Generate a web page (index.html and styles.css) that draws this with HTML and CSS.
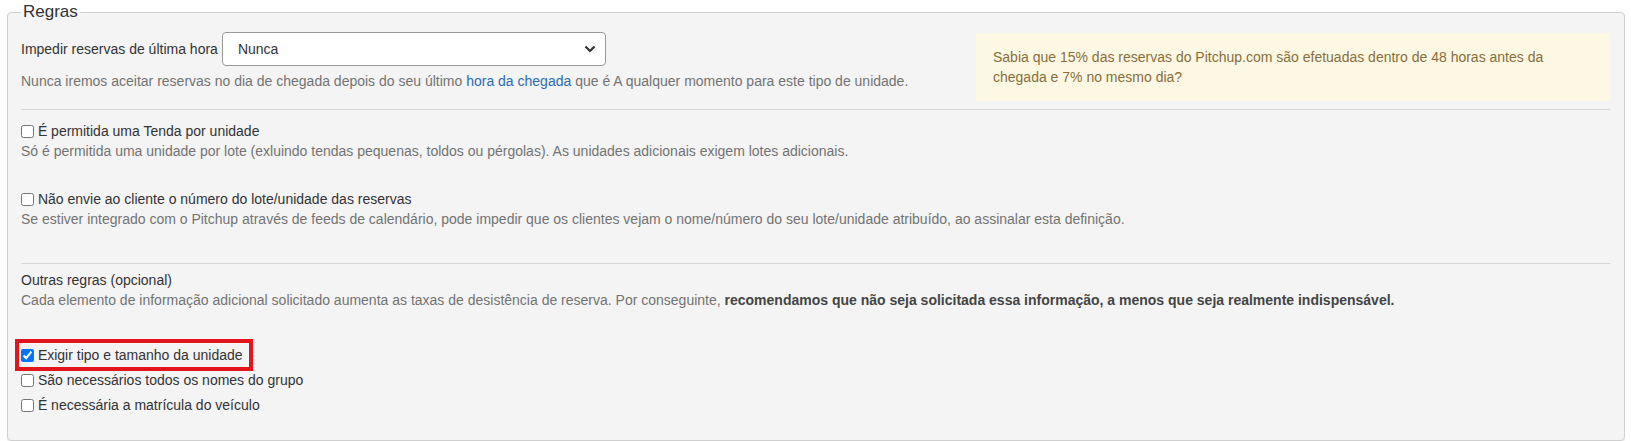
FILE: index.html
```html
<!DOCTYPE html>
<html lang="pt">
<head>
    <meta charset="UTF-8">
    <meta name="viewport" content="width=device-width, initial-scale=1.0">
    <title>Regras</title>
    <link rel="stylesheet" href="styles.css">
</head>
<body>
    <fieldset class="rules">
        <legend>Regras</legend>

        <div class="rules-top">
            <div class="rules-main">
                <div class="inline-field">
                    <label for="cutoff">Impedir reservas de última hora</label>
                    <span class="select-wrap">
                        <select id="cutoff">
                            <option>Nunca</option>
                            <option>No dia de chegada</option>
                            <option>24 horas antes</option>
                        </select>
                        <svg class="chevron" width="12" height="8" viewBox="0 0 12 8"><path d="M1.5 1.5 L6 6 L10.5 1.5" fill="none" stroke="#333" stroke-width="2.2"/></svg>
                    </span>
                </div>
                <p class="help">Nunca iremos aceitar reservas no dia de chegada depois do seu último <a href="#">hora da chegada</a> que é A qualquer momento para este tipo de unidade.</p>
            </div>
            <div class="rules-side">
                <div class="tip">Sabia que 15% das reservas do Pitchup.com são efetuadas dentro de 48 horas antes da chegada e 7% no mesmo dia?</div>
            </div>
        </div>

        <hr>

        <div class="option">
            <label class="check"><input type="checkbox"> É permitida uma Tenda por unidade</label>
            <p class="help">Só é permitida uma unidade por lote (exluindo tendas pequenas, toldos ou pérgolas). As unidades adicionais exigem lotes adicionais.</p>
        </div>

        <div class="option">
            <label class="check"><input type="checkbox"> Não envie ao cliente o número do lote/unidade das reservas</label>
            <p class="help">Se estiver integrado com o Pitchup através de feeds de calendário, pode impedir que os clientes vejam o nome/número do seu lote/unidade atribuído, ao assinalar esta definição.</p>
        </div>

        <hr class="sep-other">

        <div class="other">
            <div class="other-title">Outras regras (opcional)</div>
            <p class="help">Cada elemento de informação adicional solicitado aumenta as taxas de desistência de reserva. Por conseguinte, <b>recomendamos que não seja solicitada essa informação, a menos que seja realmente indispensável.</b></p>
        </div>

        <div class="check-list">
            <div><label class="check marked"><input type="checkbox" checked> Exigir tipo e tamanho da unidade</label></div>
            <div><label class="check"><input type="checkbox"> São necessários todos os nomes do grupo</label></div>
            <div><label class="check"><input type="checkbox"> É necessária a matrícula do veículo</label></div>
        </div>
    </fieldset>
</body>
</html>
```

FILE: styles.css
```css
body {
	margin: 2px 6px 0 7px;
	font-family: "Liberation Sans", Arial, sans-serif;
	font-size: 14px;
	line-height: 20px;
	color: #333;
	background: #fff;
}

.rules {
	margin: 0;
	padding: 10px 14px 20px 13px;
	background: #f4f4f4;
	border: 1px solid #cfcfcf;
	border-radius: 4px;
	box-shadow: 0 1px 0 #e4e4e4;
}

.rules legend {
	font-size: 17px;
	line-height: 20px;
	padding: 0 2px;
	color: #333;
}

.rules-top {
	display: flex;
	justify-content: space-between;
	align-items: flex-start;
}

.inline-field {
	display: flex;
	align-items: center;
	gap: 4px;
}

.select-wrap {
	position: relative;
	display: block;
}

.select-wrap select {
	display: block;
	width: 384px;
	height: 34px;
	padding: 0 30px 0 15px;
	font-family: inherit;
	font-size: 14px;
	color: #333;
	background: #fff;
	border: 1px solid #9a9a9a;
	border-radius: 4px;
	appearance: none;
	-webkit-appearance: none;
}

.select-wrap .chevron {
	position: absolute;
	right: 10px;
	top: 13px;
	pointer-events: none;
}

.help {
	margin: 0;
	color: #737373;
}

.rules-top .help {
	margin-top: 5px;
}

.help a {
	color: #2b6cb0;
	text-decoration: none;
}

.help b {
	color: #444;
}

.rules-side {
	width: 634px;
	padding-top: 1px;
}

.tip {
	background: #fcf8e3;
	color: #8a6d3b;
	padding: 14px 17px 14px 17px;
	line-height: 20px;
}

hr {
	margin: 8px 0 11px;
	border: 0;
	border-top: 1px solid #d6d6d6;
}

.option {
	margin-bottom: 28px;
}

.sep-other {
	margin-top: 34px;
	margin-bottom: 6px;
}

.check {
	display: inline-block;
	color: #333;
}

.check input {
	margin: 0 0 0 0;
	vertical-align: -2px;
}

.other {
	margin-bottom: 35px;
}

.check-list > div {
	height: 25px;
}

.check.marked {
	outline: 4px solid #e2141c;
	outline-offset: 2px;
	padding-right: 4px;
}
```
